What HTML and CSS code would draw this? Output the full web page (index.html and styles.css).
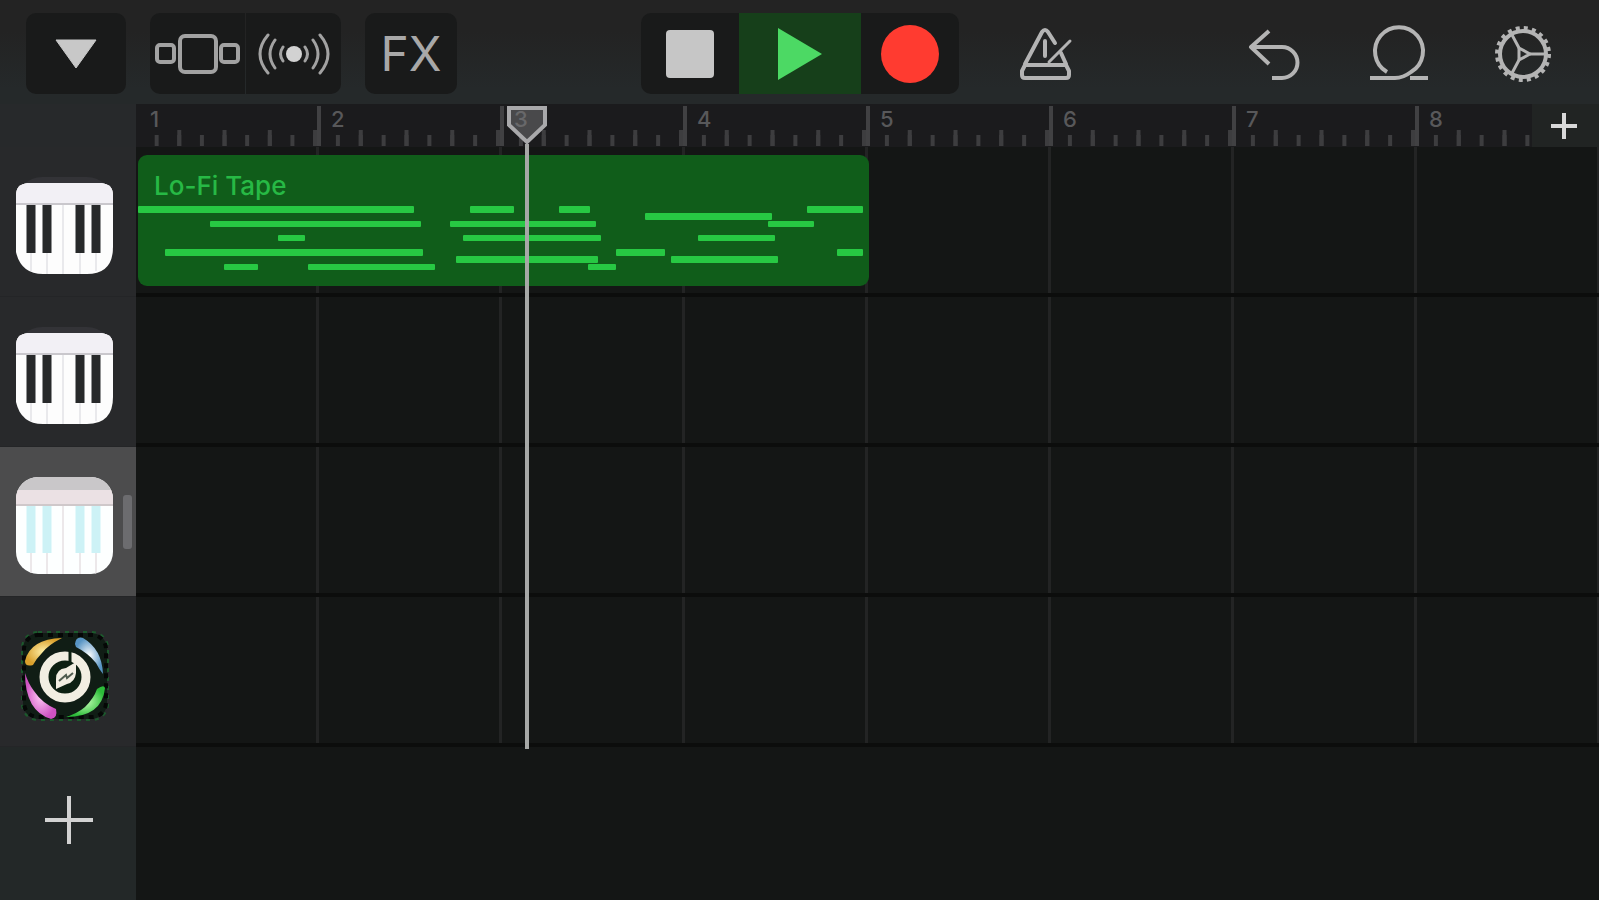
FILE: index.html
```
<!DOCTYPE html>
<html lang="en">
<head>
    <meta charset="UTF-8">
    <meta name="viewport" content="width=device-width, initial-scale=1.0">
    <title>Lo-Fi Tape</title>
    <link rel="stylesheet" href="styles.css">
</head>
<body>
    <header class="toolbar">
        <div class="tools-left">
            <button class="btn btn-menu" aria-label="Menu">
                <svg width="44" height="30" viewBox="0 0 44 30"><path d="M2 1H42L22 29Z" fill="#c8c8c8" stroke="#c8c8c8" stroke-linejoin="round"/></svg>
            </button>
            <div class="btn-group">
                <button class="btn" aria-label="Sound browser">
                    <svg width="88" height="44" viewBox="0 0 88 44" fill="none" stroke="#a2a2a2" stroke-width="4">
                        <rect x="3" y="13" width="17" height="17" rx="3"/>
                        <rect x="26" y="4" width="36" height="36" rx="5"/>
                        <rect x="67" y="13" width="17" height="17" rx="3"/>
                    </svg>
                </button>
                <button class="btn" aria-label="Live loops">
                    <svg width="76" height="44" viewBox="0 0 76 44" fill="none" stroke="#a2a2a2" stroke-width="3" stroke-linecap="round">
                        <circle cx="38" cy="22" r="8" fill="#d2d2d2" stroke="none"/>
                        <path d="M27 15Q22 22 27 29M19 8Q9 22 19 36M12 3Q-4 22 12 41"/>
                        <path d="M49 15Q54 22 49 29M57 8Q67 22 57 36M64 3Q80 22 64 41"/>
                    </svg>
                </button>
            </div>
            <button class="btn btn-fx">FX</button>
        </div>

        <div class="transport">
            <button class="btn btn-stop" aria-label="Stop">
                <svg width="48" height="48" viewBox="0 0 48 48"><rect width="48" height="48" rx="4" fill="#c6c6c6"/></svg>
            </button>
            <button class="btn btn-play" aria-label="Play">
                <svg width="46" height="54" viewBox="0 0 46 54"><path d="M1 1L45 27L1 53Z" fill="#4cd964"/></svg>
            </button>
            <button class="btn btn-record" aria-label="Record">
                <svg width="58" height="58" viewBox="0 0 58 58"><circle cx="29" cy="29" r="29" fill="#ff3b30"/></svg>
            </button>
        </div>

        <div class="tools-right">
            <button class="icon-btn" aria-label="Metronome">
                <svg width="60" height="60" viewBox="0 0 60 60" fill="none" stroke="#b4b4b4" stroke-width="4" stroke-linecap="round" stroke-linejoin="round">
                    <path d="M9 40L26 8Q29 4 32 8L39 19M45 29L50 40M29 17V32"/>
                    <path d="M54 17L33 38" stroke-width="3"/>
                    <path d="M9 41H50L53 47V51Q53 54 50 54H9Q6 54 6 51V47Z"/>
                </svg>
            </button>
            <div class="tools-edit">
                <button class="icon-btn" aria-label="Undo">
                    <svg width="60" height="60" viewBox="0 0 60 60" fill="none" stroke="#b4b4b4" stroke-width="4" stroke-linejoin="round">
                        <path d="M24 7L6 23L24 40M6 23H37A15 15 0 0 1 37 54H27"/>
                    </svg>
                </button>
                <button class="icon-btn" aria-label="Loop browser">
                    <svg width="60" height="60" viewBox="0 0 60 60" fill="none" stroke="#b4b4b4" stroke-width="4">
                        <path d="M18 48A24 24 0 1 1 42 48Q34 54 26 54H1M41 54H59"/>
                    </svg>
                </button>
                <button class="icon-btn" aria-label="Settings">
                    <svg width="60" height="60" viewBox="0 0 60 60" fill="none" stroke="#b4b4b4">
                        <circle cx="30" cy="30" r="23" stroke-width="4"/>
                        <circle cx="30" cy="30" r="26" stroke-width="4" stroke-dasharray="4 4.17"/>
                        <path d="M37 30H54M26 24L18 9M26 36L18 51" stroke-width="3"/>
                        <path d="M26 24L37 30L26 36Z" stroke-width="3" stroke-linejoin="round"/>
                    </svg>
                </button>
            </div>
        </div>
    </header>

    <div class="workspace">
        <!-- track headers -->
        <aside class="sidebar">
            <div class="sidebar-head"></div>
            <button class="track" aria-label="Keyboard 1">
                <svg class="track-icon" viewBox="0 0 97 97">
                    <rect y="0" width="97" height="60" rx="26" fill="#333337"/>
                    <path d="M0 27V18Q0 7 12 6H85Q97 7 97 18V70Q97 97 71 97H27Q5 97 0 75Z" fill="#fdfdfd"/>
                    <path d="M0 27V18Q0 7 12 6H85Q97 7 97 18V27Z" fill="#f2f0f5"/>
                    <path d="M0 27H97" stroke="#c9c7cc" stroke-width="2"/>
                    <path d="M15 76V94M31 76V97M47 28V97M64 76V97M80 76V94" stroke="#e9e9ec" stroke-width="2"/>
                    <path d="M15 28V76M31 28V76M64 28V76M80 28V76" stroke="#27292a" stroke-width="9"/>
                </svg>
            </button>
            <button class="track" aria-label="Keyboard 2">
                <svg class="track-icon" viewBox="0 0 97 97">
                    <rect y="0" width="97" height="60" rx="26" fill="#333337"/>
                    <path d="M0 27V18Q0 7 12 6H85Q97 7 97 18V70Q97 97 71 97H27Q5 97 0 75Z" fill="#fdfdfd"/>
                    <path d="M0 27V18Q0 7 12 6H85Q97 7 97 18V27Z" fill="#f2f0f5"/>
                    <path d="M0 27H97" stroke="#c9c7cc" stroke-width="2"/>
                    <path d="M15 76V94M31 76V97M47 28V97M64 76V97M80 76V94" stroke="#e9e9ec" stroke-width="2"/>
                    <path d="M15 28V76M31 28V76M64 28V76M80 28V76" stroke="#27292a" stroke-width="9"/>
                </svg>
            </button>
            <button class="track selected" aria-label="Keyboard 3">
                <svg class="track-icon" viewBox="0 0 97 97">
                    <clipPath id="tile"><rect width="97" height="97" rx="22"/></clipPath>
                    <g clip-path="url(#tile)">
                        <rect width="97" height="97" fill="#fdffff"/>
                        <rect width="97" height="13" fill="#c9c7c9"/>
                        <rect y="13" width="97" height="14" fill="#ebe1e4"/>
                        <path d="M0 28H97" stroke="#cfc8ca" stroke-width="2"/>
                        <path d="M15 76V97M31 76V97M47 29V97M64 76V97M80 76V97" stroke="#ece8ea" stroke-width="2"/>
                        <path d="M15 29V76M31 29V76M64 29V76M80 29V76" stroke="#cdf2f6" stroke-width="9"/>
                    </g>
                </svg>
                <span class="handle"></span>
            </button>
            <button class="track" aria-label="Synth">
                <svg class="track-icon" viewBox="0 0 97 97">
                    <defs>
                        <radialGradient id="gold"><stop offset="0" stop-color="#fff0a8"/><stop offset="1" stop-color="#d9a02c"/></radialGradient>
                        <radialGradient id="sky"><stop offset="0" stop-color="#ffffff"/><stop offset="1" stop-color="#5794c4"/></radialGradient>
                        <radialGradient id="leaf"><stop offset="0" stop-color="#c2ffb4"/><stop offset="1" stop-color="#2cbc39"/></radialGradient>
                        <radialGradient id="pink"><stop offset="0" stop-color="#ffc9f6"/><stop offset="1" stop-color="#cf52c2"/></radialGradient>
                    </defs>
                    <rect x="7" y="6" width="84" height="86" rx="16" fill="#101d15"/>
                    <rect x="6" y="5" width="86" height="88" rx="16" fill="none" stroke="#1b5a2c" stroke-width="2" stroke-dasharray="4 5"/>
                    <rect x="8" y="8" width="82" height="82" rx="14" fill="none" stroke="#050706" stroke-width="4" stroke-dasharray="5 5"/>
                    <path d="M9 34Q14 12 46 11Q32 18 26 26Q20 32 17 38Q9 40 9 34Z" fill="url(#gold)"/>
                    <path d="M59 17Q60 9 67 11Q86 22 87 47Q83 42 80 36Q72 26 60 20Z" fill="url(#sky)"/>
                    <path d="M89 61Q86 90 50 90Q62 86 69 80Q78 71 81 62Q88 57 89 61Z" fill="url(#leaf)"/>
                    <path d="M9 46Q12 56 18 64Q26 76 40 82Q42 91 35 92Q9 84 9 46Z" fill="url(#pink)"/>
                    <circle cx="49" cy="50" r="21" fill="#0d2012" stroke="#f2eee2" stroke-width="9"/>
                    <path d="M54 22V38" stroke="#0d2012" stroke-width="3"/>
                    <path d="M40 62V52Q40 42 50 41L60 35V46Q59 55 51 57Z" fill="#f2eee2"/>
                    <path d="M43 54L50 48L51 51L57 46" fill="none" stroke="#4f5c4f" stroke-width="2"/>
                </svg>
            </button>
            <button class="add-track" aria-label="Add track">
                <svg width="48" height="48" viewBox="0 0 48 48"><path d="M24 0V48M0 24H48" stroke="#d2d2d2" stroke-width="4"/></svg>
            </button>
        </aside>

        <main class="arrangement">
            <div class="ruler-row">
                <ol class="ruler">
                    <li class="bar">1</li>
                    <li class="bar">2</li>
                    <li class="bar">3</li>
                    <li class="bar">4</li>
                    <li class="bar">5</li>
                    <li class="bar">6</li>
                    <li class="bar">7</li>
                    <li class="bar">8</li>
                </ol>
                <button class="add-section" aria-label="Add section">
                    <svg width="26" height="26" viewBox="0 0 26 26"><path d="M13 0V26M0 13H26" stroke="#d8d8d8" stroke-width="4"/></svg>
                </button>
            </div>

            <div class="lane">
                <section class="region">
                    <h2 class="region-name">Lo-Fi Tape</h2>
                    <svg class="notes" viewBox="0 0 730 70" fill="#27c943">
                        <rect x="0" y="0" width="276" height="7" rx="1"/>
                        <rect x="332" y="0" width="44" height="7" rx="1"/>
                        <rect x="421" y="0" width="31" height="7" rx="1"/>
                        <rect x="669" y="0" width="56" height="7" rx="1"/>
                        <rect x="507" y="7" width="127" height="7" rx="1"/>
                        <rect x="72" y="15" width="211" height="6" rx="1"/>
                        <rect x="312" y="15" width="146" height="6" rx="1"/>
                        <rect x="630" y="15" width="46" height="6" rx="1"/>
                        <rect x="140" y="29" width="27" height="6" rx="1"/>
                        <rect x="325" y="29" width="138" height="6" rx="1"/>
                        <rect x="560" y="29" width="77" height="6" rx="1"/>
                        <rect x="27" y="43" width="258" height="7" rx="1"/>
                        <rect x="478" y="43" width="49" height="7" rx="1"/>
                        <rect x="699" y="43" width="26" height="7" rx="1"/>
                        <rect x="318" y="50" width="142" height="7" rx="1"/>
                        <rect x="533" y="50" width="107" height="7" rx="1"/>
                        <rect x="86" y="58" width="34" height="6" rx="1"/>
                        <rect x="170" y="58" width="127" height="6" rx="1"/>
                        <rect x="450" y="58" width="28" height="6" rx="1"/>
                    </svg>
                </section>
            </div>
            <div class="lane"></div>
            <div class="lane"></div>
            <div class="lane"></div>

            <div class="playhead">
                <svg width="40" height="38" viewBox="0 0 40 38"><path d="M2 2H38V19L20 36L2 19Z" fill="#77777a" fill-opacity="0.5" stroke="#a9a9ab" stroke-width="4"/></svg>
            </div>
        </main>
    </div>
</body>
</html>
```
FILE: styles.css
```
* {
    box-sizing: border-box;
}
body {
    margin: 0;
    min-height: 100vh;
    display: flex;
    flex-direction: column;
    background: #141615;
    font-family: Inter, "Liberation Sans", sans-serif;
    color: #a8a8a8;
}
button {
    margin: 0;
    padding: 0;
    border: none;
    background: none;
    color: inherit;
    font-family: inherit;
    display: flex;
    align-items: center;
    justify-content: center;
    cursor: pointer;
}
svg {
    display: block;
}

/* toolbar */
.toolbar {
    display: grid;
    grid-template-columns: 1fr auto 1fr;
    padding: 13px 0 10px;
    background: linear-gradient(#232323 30%, #25292a 85%);
}
.tools-left {
    display: flex;
    gap: 24px;
    padding-left: 26px;
}
.btn {
    width: 95px;
    height: 81px;
    background: #191a1a;
}
.btn-menu {
    width: 100px;
    border-radius: 10px;
}
.btn-group {
    display: flex;
    gap: 1px;
    border-radius: 10px;
    overflow: hidden;
}
.btn-fx {
    width: 92px;
    border-radius: 10px;
    font-size: 48px;
    font-weight: 400;
}
.transport {
    display: flex;
    border-radius: 10px;
    overflow: hidden;
}
.btn-stop,
.btn-record {
    width: 98px;
}
.btn-play {
    width: 122px;
    background: #163f1a;
}
.tools-right {
    display: flex;
    justify-content: space-between;
    padding: 0 46px 0 57px;
}
.tools-edit {
    display: flex;
    gap: 64px;
}
.icon-btn {
    width: 60px;
}

/* track headers */
.workspace {
    flex: 1;
    display: grid;
    grid-template-columns: 136px 1fr;
}
.sidebar {
    display: flex;
    flex-direction: column;
    background: #28292b;
}
.sidebar-head {
    height: 43px;
    background: #27292b;
}
.track {
    position: relative;
    height: 150px;
    padding: 30px 0 0 16px;
    align-items: flex-start;
    justify-content: flex-start;
    border-bottom: 1px solid #242527;
}
.track.selected {
    background: #4c4c4d;
}
.track-icon {
    width: 97px;
    height: 97px;
}
.handle {
    position: absolute;
    top: 48px;
    right: 4px;
    width: 9px;
    height: 54px;
    border-radius: 3px;
    background: #6c6c6f;
}
.add-track {
    flex: 1;
    min-height: 120px;
    padding: 0 0 8px 2px;
    background: #232828;
}

/* timeline */
.arrangement {
    position: relative;
    min-width: 0;
}
.ruler-row {
    display: flex;
    height: 43px;
}
.ruler {
    flex: 1;
    min-width: 0;
    display: flex;
    overflow: hidden;
    margin: 0;
    padding: 2px 0 1px;
    list-style: none;
    background: #1b1b1d;
}
.bar {
    flex: none;
    width: 183px;
    padding: 2px 0 0 10px;
    border-left: 4px solid #414143;
    color: #58585a;
    font-size: 22px;
    font-weight: 500;
    line-height: 22px;
    background-image:
        linear-gradient(to left, #3d3d3f 4px, transparent 4px),
        linear-gradient(to left, #3d3d3f 4px, transparent 4px);
    background-size: 12.5% 11px, 25% 16px;
    background-position: left bottom;
    background-repeat: repeat-x;
    background-origin: border-box;
}
.bar:first-child {
    width: 181px;
    border-left-color: transparent;
}
.add-section {
    width: 67px;
    padding-right: 3px;
    background: #212423;
}
.lane {
    height: 150px;
    padding: 8px 0 0 2px;
    border-bottom: 4px solid #0c0d0c;
    background-image: linear-gradient(to right, #232424 3px, transparent 3px);
    background-size: 183px 100%;
    background-position: -3px 0;
}
.region {
    width: 731px;
    height: 131px;
    padding-top: 17px;
    border-radius: 9px;
    background: #105d1a;
    overflow: hidden;
}
.region-name {
    margin: 0 0 6px;
    padding-left: 16px;
    font-size: 26px;
    font-weight: 500;
    line-height: 28px;
    color: #27b945;
}
.notes {
    width: 730px;
    height: 70px;
}
.playhead {
    position: absolute;
    top: 2px;
    left: 371px;
    width: 40px;
    height: 643px;
    display: flex;
    flex-direction: column;
    align-items: center;
}
.playhead::after {
    content: "";
    flex: 1;
    width: 4px;
    background: #a6a8a6;
}
```
